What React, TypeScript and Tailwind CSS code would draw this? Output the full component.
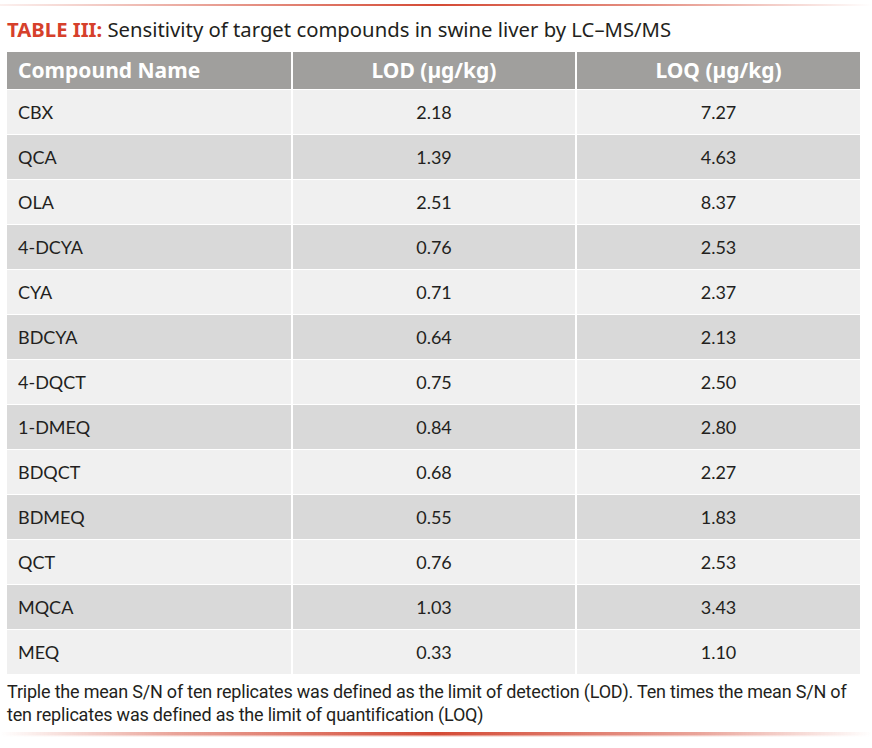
const rows: [string, string, string][] = [
  ['CBX', '2.18', '7.27'],
  ['QCA', '1.39', '4.63'],
  ['OLA', '2.51', '8.37'],
  ['4-DCYA', '0.76', '2.53'],
  ['CYA', '0.71', '2.37'],
  ['BDCYA', '0.64', '2.13'],
  ['4-DQCT', '0.75', '2.50'],
  ['1-DMEQ', '0.84', '2.80'],
  ['BDQCT', '0.68', '2.27'],
  ['BDMEQ', '0.55', '1.83'],
  ['QCT', '0.76', '2.53'],
  ['MQCA', '1.03', '3.43'],
  ['MEQ', '0.33', '1.10'],
];

export default function App() {
  return (
    <div className="w-[872px] h-[748px] bg-white font-['Lato',sans-serif] text-[#231f20] overflow-hidden">
      {/* top rule */}
      <div className="pt-[4px]">
        <div className="h-[2px] bg-[linear-gradient(90deg,rgba(212,74,53,0.08)_0%,#d44a35_50%,rgba(212,74,53,0.6)_75%,rgba(212,74,53,0)_100%)]" />
      </div>

      <h1 className="pl-[7px] mt-[9px] text-[20.3px] leading-[28px] font-['Noto_Sans',sans-serif]">
        <span className="font-bold text-[#d6402b]">TABLE III:</span> Sensitivity of target compounds in swine liver by LC–MS/MS
      </h1>

      <div className="mt-[9px] ml-[7px] w-[853px] grid grid-cols-[284px_282px_283px] gap-x-[2px] gap-y-px bg-white">
        <div className="h-[37px] bg-[#a09f9d] flex items-center pl-[11px] text-white font-bold text-[21px] font-['Noto_Sans',sans-serif]">Compound Name</div>
        <div className="h-[37px] bg-[#a09f9d] flex items-center justify-center text-white font-bold text-[21px] font-['Noto_Sans',sans-serif]">LOD (µg/kg)</div>
        <div className="h-[37px] bg-[#a09f9d] flex items-center justify-center text-white font-bold text-[21px] font-['Noto_Sans',sans-serif]">LOQ (µg/kg)</div>
        {rows.map(([name, lod, loq], i) => {
          const bg = i % 2 === 0 ? 'bg-[#f0f0f0]' : 'bg-[#d9d9d9]';
          return [
            <div key={name + 'a'} className={`h-[44px] ${bg} flex items-center pl-[11px] text-[18px]`}>{name}</div>,
            <div key={name + 'b'} className={`h-[44px] ${bg} flex items-center justify-center text-[18px]`}>{lod}</div>,
            <div key={name + 'c'} className={`h-[44px] ${bg} flex items-center justify-center text-[18px]`}>{loq}</div>,
          ];
        })}
      </div>

      <p className="pl-[7px] pr-[4px] mt-[6px] text-[18px] leading-[23px] tracking-[-0.2px] font-['Roboto',sans-serif]">
        Triple the mean S/N of ten replicates was defined as the limit of detection (LOD). Ten times the mean S/N of ten replicates was defined as the limit of quantification (LOQ)
      </p>

      {/* bottom rule */}
      <div className="mt-[6px] h-[5px] bg-[linear-gradient(90deg,rgba(212,74,53,0)_0%,rgba(212,74,53,0.5)_20%,#d44a35_50%,rgba(212,74,53,0.5)_80%,rgba(212,74,53,0)_100%)] [mask-image:linear-gradient(180deg,#000_50%,transparent)]" />
    </div>
  );
}
